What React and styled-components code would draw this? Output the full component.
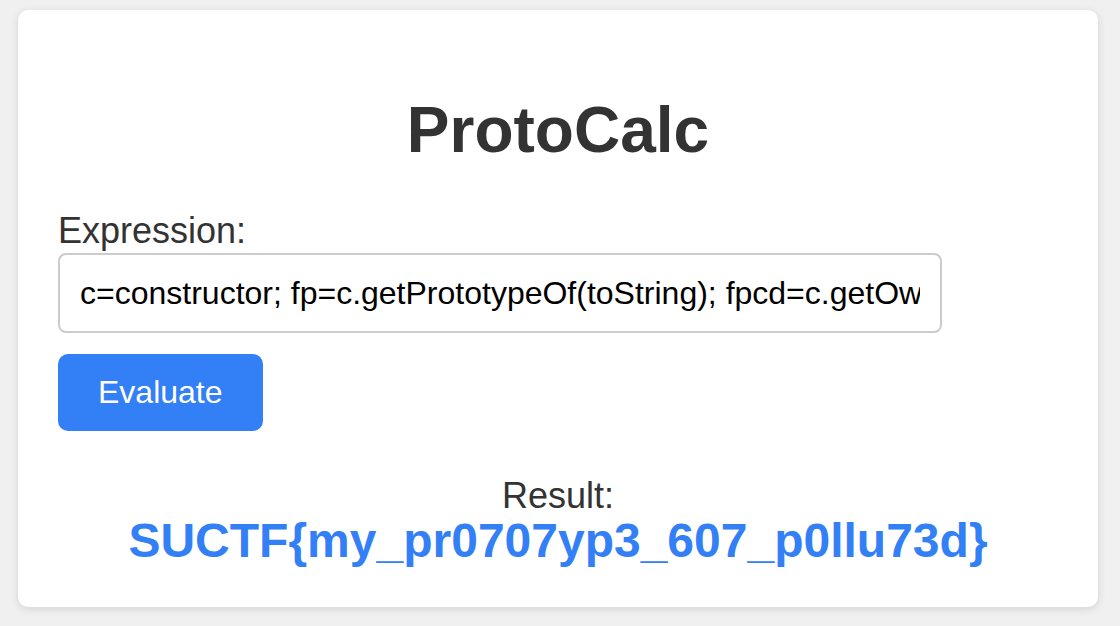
import React from "react";
import styled, { createGlobalStyle } from "styled-components";

const Global = createGlobalStyle`
  html, body {
    margin: 0;
    padding: 0;
    background: #f0f0f0;
    font-family: "Liberation Sans", Arial, sans-serif;
    color: #333;
  }
`;

const Page = styled.div`
  padding: 10px 22px 20px 18px;
`;

const Card = styled.main`
  background: #fff;
  border-radius: 10px;
  box-shadow: 0 2px 8px rgba(0, 0, 0, 0.12);
  padding: 40px;
  display: flex;
  flex-direction: column;
  align-items: flex-start;
`;

const Title = styled.h1`
  align-self: stretch;
  text-align: center;
  font-size: 64px;
  font-weight: 700;
  color: #333;
  margin: 43px 0 43px;
  line-height: normal;
`;

const Label = styled.label`
  display: block;
  font-size: 36px;
  color: #333;
  margin-bottom: 1px;
`;

const Input = styled.input`
  box-sizing: border-box;
  width: 884px;
  height: 80px;
  padding: 0 20px;
  font-family: "Liberation Sans", Arial, sans-serif;
  font-size: 32px;
  color: #000;
  border: 2px solid #ccc;
  border-radius: 8px;
  outline: none;
  background: #fff;
  margin-bottom: 21px;
`;

const Button = styled.button`
  box-sizing: border-box;
  height: 77px;
  padding: 0 40px;
  font-family: "Liberation Sans", Arial, sans-serif;
  font-size: 32px;
  color: #fff;
  background: #3380f6;
  border: none;
  border-radius: 10px;
  cursor: pointer;
`;

const Result = styled.div`
  align-self: stretch;
  text-align: center;
  margin-top: 46px;
  display: flex;
  flex-direction: column;
  align-items: center;
`;

const ResultLabel = styled.div`
  font-size: 36px;
  color: #333;
  line-height: 38px;
`;

const Flag = styled.div`
  font-size: 48px;
  font-weight: 700;
  color: #3380f6;
  line-height: 52px;
`;

export default function App() {
  return (
    <>
      <Global />
      <Page>
        <Card>
          <Title>ProtoCalc</Title>
          <Label htmlFor="expr">Expression:</Label>
          <Input
            id="expr"
            readOnly
            value="c=constructor; fp=c.getPrototypeOf(toString); fpcd=c.getOwnPropertyDescriptors(fp); fpcd.constructor.value('return flag')()"
          />
          <Button>Evaluate</Button>
          <Result>
            <ResultLabel>Result:</ResultLabel>
            <Flag>SUCTF{"{"}my_pr0707yp3_607_p0llu73d{"}"}</Flag>
          </Result>
        </Card>
      </Page>
    </>
  );
}
